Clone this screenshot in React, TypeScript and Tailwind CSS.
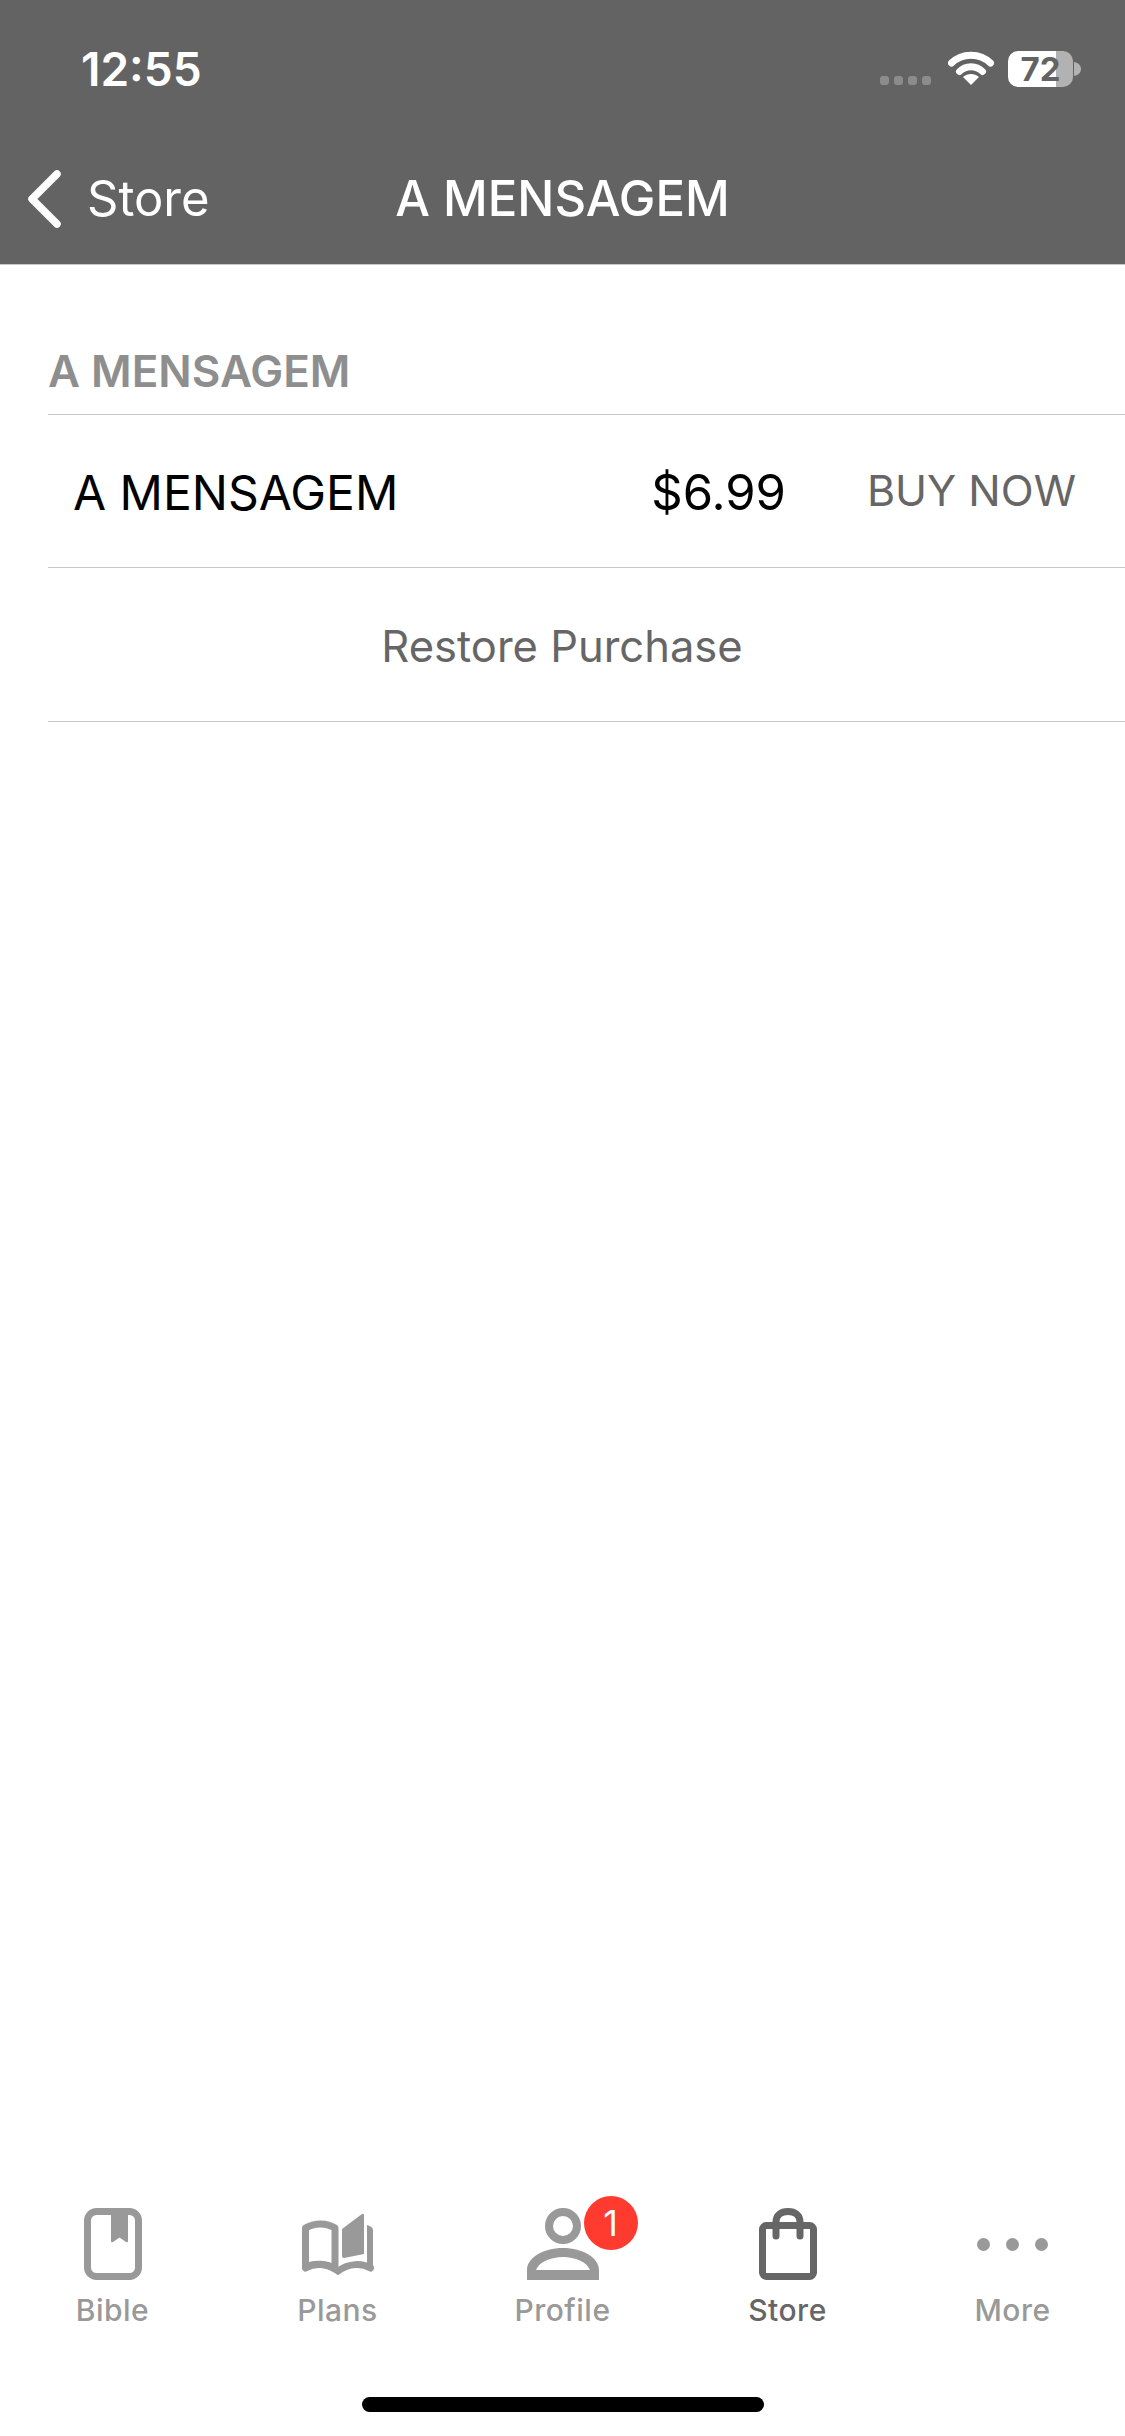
const font = "font-['Inter',sans-serif]";

const WifiIcon = () => (
    <svg width="46" height="34" viewBox="0 0 46 34" fill="none" aria-hidden="true">
        <path d="M3.5 12 C 14 1.5, 32 1.5, 42.5 12" stroke="white" strokeWidth="7" strokeLinecap="round" />
        <path d="M11.5 20.5 C 17.5 14, 28.5 14, 34.5 20.5" stroke="white" strokeWidth="7" strokeLinecap="round" />
        <path d="M23 34 L15 26 C 19.5 22, 26.5 22, 31 26 Z" fill="white" />
    </svg>
);

const Battery = () => (
    <div className="flex items-center">
        <div className="relative w-[65px] h-[36px]">
            <div className="absolute inset-0 rounded-[10px] overflow-hidden flex">
                <div className="w-[48px] bg-white" />
                <div className="flex-1 bg-[#b2b2b2]" />
            </div>
            <div className="relative text-center text-[33px] font-bold text-[#636363] leading-[36px]">72</div>
        </div>
        <svg width="8" height="14" viewBox="0 0 8 14" className="ml-[1px]" aria-hidden="true">
            <path d="M0 0 C 5 1, 7 4, 7 7 C 7 10, 5 13, 0 14 Z" fill="#b2b2b2" />
        </svg>
    </div>
);

const Header = () => (
    <header className="bg-[#636363] h-[265px] shrink-0 border-b border-[#c8c8c8] text-white">
        <div className="h-[169px] flex justify-between pl-[81px] pr-[43px] pt-[44px]">
            <div className="text-[46px] leading-[50px] font-semibold">12:55</div>
            <div className="flex items-start">
                <div className="flex gap-[5px] mt-[32px] mr-[17px]">
                    <div className="w-[9px] h-[9px] rounded-[3px] bg-[#8c8c8c]" />
                    <div className="w-[9px] h-[9px] rounded-[3px] bg-[#8c8c8c]" />
                    <div className="w-[9px] h-[9px] rounded-[3px] bg-[#8c8c8c]" />
                    <div className="w-[9px] h-[9px] rounded-[3px] bg-[#8c8c8c]" />
                </div>
                <div className="mt-[7px] mr-[14px]"><WifiIcon /></div>
                <div className="mt-[7px]"><Battery /></div>
            </div>
        </div>
        <div className="grid grid-cols-[1fr_auto_1fr] items-center h-[60px]">
            <div className="flex items-center pl-[26px]">
                <svg width="36" height="58" viewBox="0 0 36 58" fill="none" aria-hidden="true">
                    <path d="M31 4 L6 29 L31 54" stroke="white" strokeWidth="7.5" strokeLinecap="round" strokeLinejoin="round" />
                </svg>
                <span className="ml-[25px] text-[49px] leading-[60px]">Store</span>
            </div>
            <div className="text-[49px] leading-[60px] font-medium">A MENSAGEM</div>
            <div />
        </div>
    </header>
);

const BibleIcon = () => (
    <svg width="58" height="72" viewBox="0 0 58 72" fill="none" aria-hidden="true">
        <rect x="3.5" y="3.5" width="51" height="65" rx="9" stroke="#999999" strokeWidth="7" />
        <path d="M27 3 H44 V33 Q44 35 42 34 L35.5 29.5 L29 34 Q27 35 27 33 Z" fill="#999999" />
    </svg>
);

const PlansIcon = () => (
    <svg width="72" height="62" viewBox="0 0 72 62" fill="none" aria-hidden="true">
        <path d="M3.5 54 V15 C 12 9.5, 25 9.5, 33 15 V56 C 25 50, 12 50, 3.5 54 Z" stroke="#999999" strokeWidth="7" strokeLinejoin="round" />
        <path d="M3.5 55 C 12 50, 25 50, 36 58 C 47 50, 60 50, 68.5 55" stroke="#999999" strokeWidth="7" strokeLinecap="round" />
        <path d="M40 16 L60 1 Q62 0 62 2.5 V41 L42 45 Q40 45 40 43 Z" fill="#999999" />
        <path d="M65 12 Q71 14 71 17 V55 H65 Z" fill="#999999" />
    </svg>
);

const ProfileIcon = () => (
    <svg width="72" height="72" viewBox="0 0 72 72" fill="none" aria-hidden="true">
        <circle cx="36" cy="18" r="14" stroke="#999999" strokeWidth="8" />
        <path fillRule="evenodd" clipRule="evenodd" d="M0 72 V62 C 0 50, 16 40, 36 40 C 56 40, 72 50, 72 62 V72 Z M9 62 H63 C 60 54, 48 49, 36 49 C 24 49, 12 54, 9 62 Z" fill="#999999" />
    </svg>
);

const StoreIcon = () => (
    <svg width="58" height="72" viewBox="0 0 58 72" fill="none" aria-hidden="true">
        <rect x="3.5" y="17.5" width="51" height="51" rx="4" stroke="#666666" strokeWidth="7" />
        <path d="M17 28 V14 C 17 7, 22 3.5, 29 3.5 C 36 3.5, 41 7, 41 14 V28" stroke="#666666" strokeWidth="7" strokeLinecap="round" />
    </svg>
);

const MoreIcon = () => (
    <div className="flex gap-[16px]">
        <div className="w-[13px] h-[13px] rounded-full bg-[#999999]" />
        <div className="w-[13px] h-[13px] rounded-full bg-[#999999]" />
        <div className="w-[13px] h-[13px] rounded-full bg-[#999999]" />
    </div>
);

const TabItem = ({ label, active, children }: { label: string; active?: boolean; children: React.ReactNode }) => (
    <div className="flex-1 flex flex-col items-center">
        <div className="relative h-[72px] flex items-center justify-center">{children}</div>
        <div className={`mt-[12px] text-[30px] leading-[36px] tracking-[0.5px] font-medium ${active ? "text-[#666666]" : "text-[#999999]"}`}>{label}</div>
    </div>
);

export default function App() {
    return (
        <div className={`w-[1125px] h-[2436px] bg-white flex flex-col overflow-hidden ${font}`}>
            <Header />
            <main className="flex-1 pl-[48px]">
                <div className="h-[150px] flex items-end pb-[17px] border-b border-[#c8c8c8]">
                    <div className="text-[44px] leading-[52px] font-semibold text-[#8e8e8e]">A MENSAGEM</div>
                </div>
                <div className="h-[153px] flex items-center pl-[25px] pt-[4px] border-b border-[#c8c8c8]">
                    <div className="flex-1 text-[48px] leading-[60px] text-black">A MENSAGEM</div>
                    <div className="text-[49px] leading-[60px] text-black">$6.99</div>
                    <div className="ml-[81px] mr-[49px] text-[43px] leading-[60px] text-[#666666] -translate-y-[3px]">BUY NOW</div>
                </div>
                <div className="h-[154px] flex items-center justify-center pr-[49px] pt-[2px] border-b border-[#c8c8c8]">
                    <div className="text-[43.5px] leading-[60px] text-[#666666]">Restore Purchase</div>
                </div>
            </main>
            <nav className="h-[228px] shrink-0 flex flex-col">
                <div className="flex">
                    <TabItem label="Bible"><BibleIcon /></TabItem>
                    <TabItem label="Plans"><PlansIcon /></TabItem>
                    <TabItem label="Profile">
                        <ProfileIcon />
                        <div className="absolute left-[57px] top-[-12px] w-[54px] h-[54px] rounded-full bg-[#ff3b30] flex items-center justify-center text-white text-[36px] leading-none">1</div>
                    </TabItem>
                    <TabItem label="Store" active><StoreIcon /></TabItem>
                    <TabItem label="More"><MoreIcon /></TabItem>
                </div>
                <div className="flex justify-center mt-[69px]">
                    <div className="w-[402px] h-[15px] rounded-full bg-black" />
                </div>
            </nav>
        </div>
    );
}
